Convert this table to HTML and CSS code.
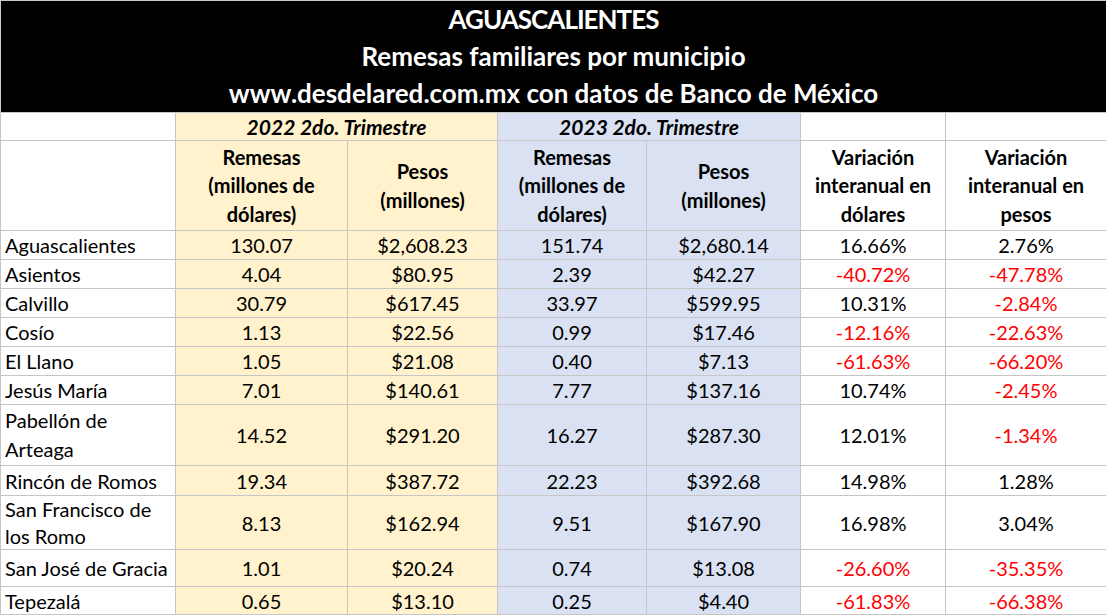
FILE: index.html
```html
<!DOCTYPE html>
<html lang="es">
<head>
<meta charset="utf-8">
<title>Aguascalientes - Remesas familiares por municipio</title>
<link rel="stylesheet" href="styles.css">
</head>
<body>
<div class="sheet">
  <header class="banner">
    <div class="banner-line banner-title">AGUASCALIENTES</div>
    <div class="banner-line">Remesas familiares por municipio</div>
    <div class="banner-line">www.desdelared.com.mx con datos de Banco de México</div>
  </header>
  <table class="grid">
    <colgroup>
      <col class="c-name">
      <col class="c-a">
      <col class="c-b">
      <col class="c-c">
      <col class="c-d">
      <col class="c-e">
      <col class="c-f">
    </colgroup>
    <thead>
      <tr class="r-year">
        <th class="blank"></th>
        <th class="yr y22" colspan="2">2022 2do. Trimestre</th>
        <th class="yr y23" colspan="2">2023 2do. Trimestre</th>
        <th class="blank"></th>
        <th class="blank"></th>
      </tr>
      <tr class="r-head">
        <th class="blank"></th>
        <th class="hd y22">Remesas<br>(millones de<br>dólares)</th>
        <th class="hd y22">Pesos<br>(millones)</th>
        <th class="hd y23">Remesas<br>(millones de<br>dólares)</th>
        <th class="hd y23">Pesos<br>(millones)</th>
        <th class="hd">Variación<br>interanual en<br>dólares</th>
        <th class="hd">Variación<br>interanual en<br>pesos</th>
      </tr>
    </thead>
    <tbody>
      <tr class="r-29">
        <td class="name">Aguascalientes</td><td class="num y22">130.07</td><td class="num y22">$2,608.23</td><td class="num y23">151.74</td><td class="num y23">$2,680.14</td><td class="num">16.66%</td><td class="num">2.76%</td>
      </tr>
      <tr class="r-29">
        <td class="name">Asientos</td><td class="num y22">4.04</td><td class="num y22">$80.95</td><td class="num y23">2.39</td><td class="num y23">$42.27</td><td class="num neg">-40.72%</td><td class="num neg">-47.78%</td>
      </tr>
      <tr class="r-29">
        <td class="name">Calvillo</td><td class="num y22">30.79</td><td class="num y22">$617.45</td><td class="num y23">33.97</td><td class="num y23">$599.95</td><td class="num">10.31%</td><td class="num neg">-2.84%</td>
      </tr>
      <tr class="r-29">
        <td class="name">Cosío</td><td class="num y22">1.13</td><td class="num y22">$22.56</td><td class="num y23">0.99</td><td class="num y23">$17.46</td><td class="num neg">-12.16%</td><td class="num neg">-22.63%</td>
      </tr>
      <tr class="r-29">
        <td class="name">El Llano</td><td class="num y22">1.05</td><td class="num y22">$21.08</td><td class="num y23">0.40</td><td class="num y23">$7.13</td><td class="num neg">-61.63%</td><td class="num neg">-66.20%</td>
      </tr>
      <tr class="r-29">
        <td class="name">Jesús María</td><td class="num y22">7.01</td><td class="num y22">$140.61</td><td class="num y23">7.77</td><td class="num y23">$137.16</td><td class="num">10.74%</td><td class="num neg">-2.45%</td>
      </tr>
      <tr class="r-61">
        <td class="name two">Pabellón de<br>Arteaga</td><td class="num y22">14.52</td><td class="num y22">$291.20</td><td class="num y23">16.27</td><td class="num y23">$287.30</td><td class="num">12.01%</td><td class="num neg">-1.34%</td>
      </tr>
      <tr class="r-30">
        <td class="name">Rincón de Romos</td><td class="num y22">19.34</td><td class="num y22">$387.72</td><td class="num y23">22.23</td><td class="num y23">$392.68</td><td class="num">14.98%</td><td class="num">1.28%</td>
      </tr>
      <tr class="r-54">
        <td class="name two tight">San Francisco de<br>los Romo</td><td class="num y22">8.13</td><td class="num y22">$162.94</td><td class="num y23">9.51</td><td class="num y23">$167.90</td><td class="num">16.98%</td><td class="num">3.04%</td>
      </tr>
      <tr class="r-37">
        <td class="name">San José de Gracia</td><td class="num y22">1.01</td><td class="num y22">$20.24</td><td class="num y23">0.74</td><td class="num y23">$13.08</td><td class="num neg">-26.60%</td><td class="num neg">-35.35%</td>
      </tr>
      <tr class="r-28">
        <td class="name">Tepezalá</td><td class="num y22">0.65</td><td class="num y22">$13.10</td><td class="num y23">0.25</td><td class="num y23">$4.40</td><td class="num neg">-61.83%</td><td class="num neg">-66.38%</td>
      </tr>
    </tbody>
  </table>
</div>
</body>
</html>
```
FILE: styles.css
```css
html, body {
  margin: 0;
  padding: 0;
  background: #ffffff;
}

.sheet {
  width: 1106px;
  font-family: "Lato", "Liberation Sans", sans-serif;
  color: #000000;
}

.banner {
  box-sizing: border-box;
  height: 112px;
  background: #000000;
  border-top: 1px solid #c8c8c8;
  border-left: 1px solid #c8c8c8;
  color: #ffffff;
  font-weight: 700;
  font-size: 26px;
  text-align: center;
  padding-top: 0;
}

.banner-line {
  height: 37px;
  line-height: 37px;
}

.banner-title {
  letter-spacing: -1px;
}

.grid {
  width: 1106px;
  border-collapse: collapse;
  table-layout: fixed;
}

.c-name { width: 175px; }
.c-a { width: 172px; }
.c-b { width: 150px; }
.c-c { width: 149px; }
.c-d { width: 154px; }
.c-e { width: 145px; }
.c-f { width: 161px; }

.grid th,
.grid td {
  border: 1px solid #c6c6c6;
  padding: 0;
  font-size: 20px;
  vertical-align: middle;
  text-align: center;
  white-space: nowrap;
}

.grid th {
  font-weight: 700;
  line-height: 28.5px;
}

.grid th.yr {
  font-style: italic;
  font-size: 21px;
  line-height: 24px;
}

.grid td {
  font-weight: 400;
  line-height: 26px;
}

.y22 { background: #fff2cc; }
.y23 { background: #d9e1f2; }

.grid td.name {
  text-align: left;
  padding-left: 4px;
}

.grid td.two { line-height: 29px; }
.grid td.tight { line-height: 26.5px; }

.neg { color: #ff0000; }

.r-year { height: 28px; }
.r-head { height: 90px; }
.r-29 { height: 29px; }
.r-61 { height: 61px; }
.r-30 { height: 30px; }
.r-54 { height: 54px; }
.r-37 { height: 37px; }
.r-28 { height: 28px; }
```
